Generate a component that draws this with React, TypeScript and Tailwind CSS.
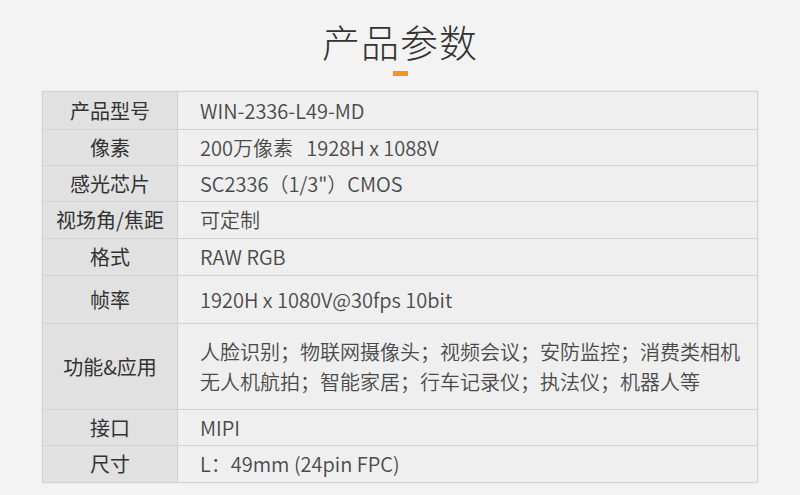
const rows: { label: string; value: string[]; h: string }[] = [
  { label: '产品型号', value: ['WIN-2336-L49-MD'], h: 'h-[37px]' },
  { label: '像素', value: ['200万像素\u00a0\u00a0\u00a01928H x 1088V'], h: 'h-[36px]' },
  { label: '感光芯片', value: ['SC2336（1/3"）CMOS'], h: 'h-[36px]' },
  { label: '视场角/焦距', value: ['可定制'], h: 'h-[37px]' },
  { label: '格式', value: ['RAW RGB'], h: 'h-[37px]' },
  { label: '帧率', value: ['1920H x 1080V@30fps 10bit'], h: 'h-[48px]' },
  {
    label: '功能&应用',
    value: ['人脸识别；物联网摄像头；视频会议；安防监控；消费类相机', '无人机航拍；智能家居；行车记录仪；执法仪；机器人等'],
    h: 'h-[86px]',
  },
  { label: '接口', value: ['MIPI'], h: 'h-[36px]' },
  { label: '尺寸', value: ['L：49mm (24pin FPC)'], h: 'h-[37px]' },
]

export default function App() {
  return (
    <div
      className="w-[800px] h-[495px] bg-[#f3f3f3] overflow-hidden [text-spacing-trim:space-all]"
      style={{ fontFamily: '"Noto Sans CJK SC", "Noto Sans", sans-serif' }}
    >
      {/* Title */}
      <div className="flex flex-col items-center pt-[18px]">
        <h1 className="text-[38px] leading-[46px] font-light text-[#333] tracking-[1px]">产品参数</h1>
        <div className="mt-[7px] w-[15px] h-[5px] bg-[#f7931e]" />
      </div>

      {/* Spec table */}
      <div className="mx-[42px] mt-[15px] border border-[#d2d2d2] shadow-[0_0_3px_rgba(0,0,0,0.06)]">
        {rows.map((r, i) => (
          <div
            key={r.label}
            className={`grid grid-cols-[135px_1fr] ${r.h} ${i > 0 ? 'border-t border-[#d2d2d2]' : ''}`}
          >
            <div className="flex items-center justify-center bg-[#e1e1e1] border-r border-[#d2d2d2] text-[20px] text-[#333]">
              {r.label}
            </div>
            <div className="flex flex-col justify-center bg-[#efefef] pl-[22px] text-[20px] leading-[30px] font-[350] text-[#4a4a4a]">
              {r.value.map((v) => (
                <span key={v} className="whitespace-nowrap">
                  {v}
                </span>
              ))}
            </div>
          </div>
        ))}
      </div>
    </div>
  )
}
